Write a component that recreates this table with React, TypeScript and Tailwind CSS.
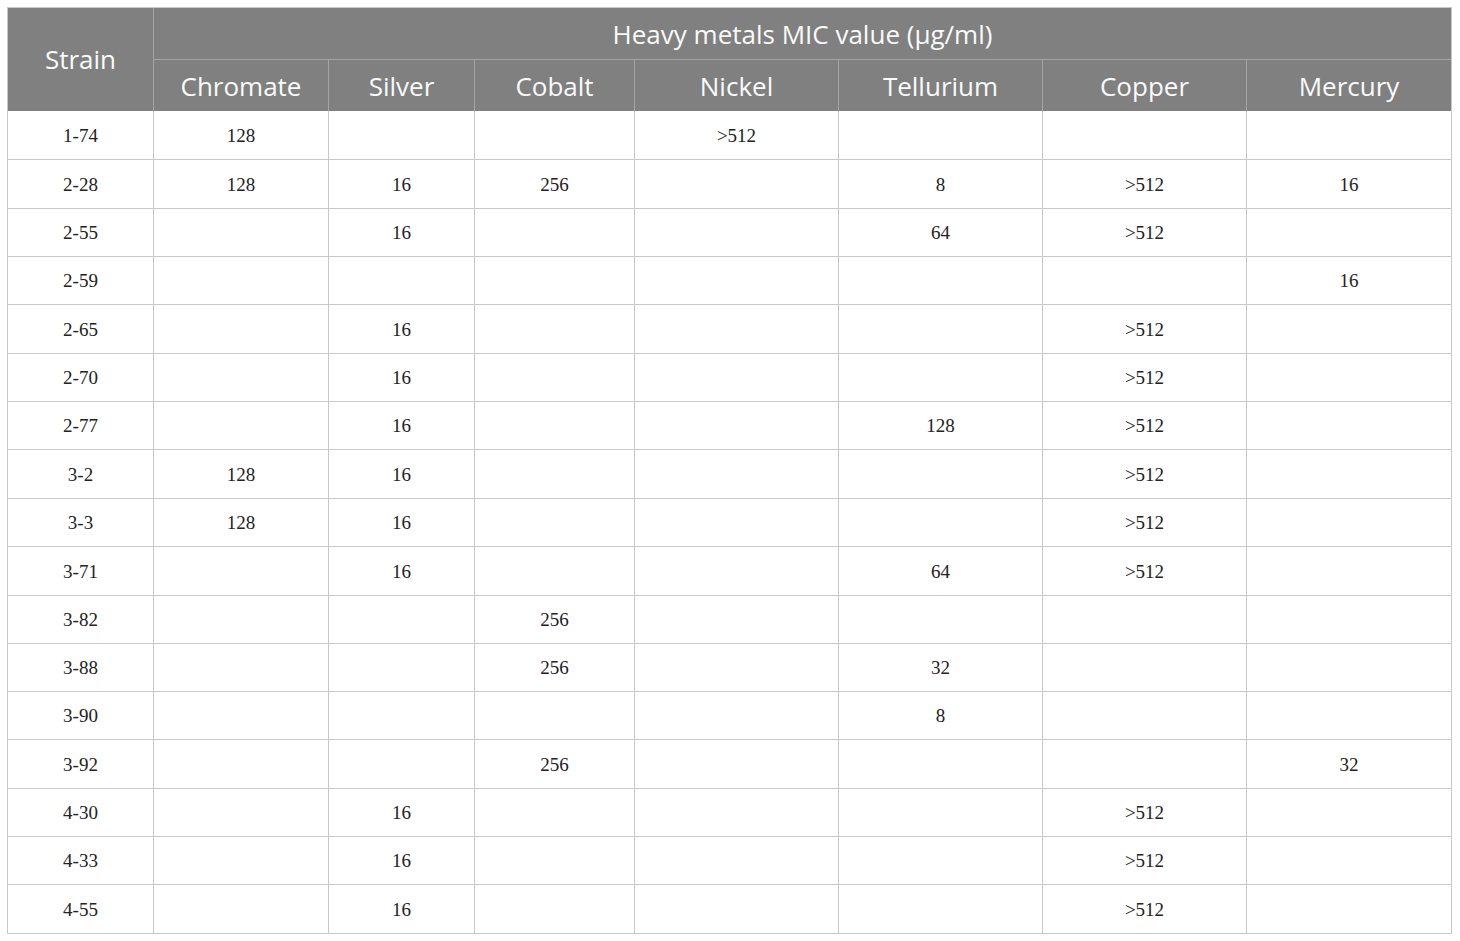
import React from "react";

const cols = ["Chromate", "Silver", "Cobalt", "Nickel", "Tellurium", "Copper", "Mercury"];
const widths = ["w-[175px]", "w-[146px]", "w-[160px]", "w-[204px]", "w-[204px]", "w-[204px]", "w-[204px]"];

const rows: [string, string[]][] = [
  ["1-74", ["128", "", "", ">512", "", "", ""]],
  ["2-28", ["128", "16", "256", "", "8", ">512", "16"]],
  ["2-55", ["", "16", "", "", "64", ">512", ""]],
  ["2-59", ["", "", "", "", "", "", "16"]],
  ["2-65", ["", "16", "", "", "", ">512", ""]],
  ["2-70", ["", "16", "", "", "", ">512", ""]],
  ["2-77", ["", "16", "", "", "128", ">512", ""]],
  ["3-2", ["128", "16", "", "", "", ">512", ""]],
  ["3-3", ["128", "16", "", "", "", ">512", ""]],
  ["3-71", ["", "16", "", "", "64", ">512", ""]],
  ["3-82", ["", "", "256", "", "", "", ""]],
  ["3-88", ["", "", "256", "", "32", "", ""]],
  ["3-90", ["", "", "", "", "8", "", ""]],
  ["3-92", ["", "", "256", "", "", "", "32"]],
  ["4-30", ["", "16", "", "", "", ">512", ""]],
  ["4-33", ["", "16", "", "", "", ">512", ""]],
  ["4-55", ["", "16", "", "", "", ">512", ""]],
];

const heights = [
  "h-[49px]", "h-[49px]", "h-[48px]", "h-[48px]", "h-[49px]", "h-[48px]", "h-[48px]", "h-[49px]",
  "h-[48px]", "h-[49px]", "h-[48px]", "h-[48px]", "h-[48px]", "h-[49px]", "h-[48px]", "h-[48px]", "h-[48px]",
];

export default function App() {
  return (
    <div className="bg-white w-[1460px] h-[941px] pl-[7px] pt-[7px]">
      <div className="w-[1445px] border border-[#c8c8c8]">
        {/* header */}
        <div className="flex bg-[#7f807f] text-[#fafafa] text-[26px] [font-family:'Open_Sans',Lato,sans-serif] leading-none">
          <div className="w-[146px] h-[103px] flex items-center justify-center border-r border-[#a3a4a3] pb-[2px]">Strain</div>
          <div className="flex-1 flex flex-col">
            <div className="h-[52px] flex items-center justify-center border-b border-[#a3a4a3]">Heavy metals MIC value (µg/ml)</div>
            <div className="flex h-[51px]">
              {cols.map((c, i) => (
                <div
                  key={c}
                  className={`${widths[i]} flex items-center justify-center ${i < cols.length - 1 ? "border-r border-[#a3a4a3]" : ""}`}
                >
                  {c}
                </div>
              ))}
            </div>
          </div>
        </div>
        {/* body */}
        <div className="[font-family:'Liberation_Serif',serif] text-[19px] text-[#222]">
          {rows.map(([name, vals], r) => (
            <div key={name} className={`flex ${heights[r]} ${r < rows.length - 1 ? "border-b border-[#c8c8c8]" : ""}`}>
              <div className="w-[146px] flex items-center justify-center border-r border-[#c8c8c8] pt-[2px]">{name}</div>
              {vals.map((v, i) => (
                <div
                  key={i}
                  className={`${widths[i]} flex items-center justify-center pt-[2px] ${i < vals.length - 1 ? "border-r border-[#c8c8c8]" : ""}`}
                >
                  {v}
                </div>
              ))}
            </div>
          ))}
        </div>
      </div>
    </div>
  );
}
